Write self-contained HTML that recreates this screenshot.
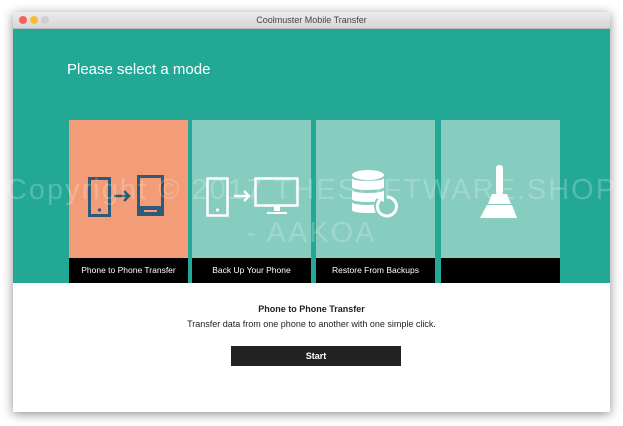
<!DOCTYPE html>
<html><head><style>
body{margin:0;width:623px;height:426px;background:#fff;position:relative;overflow:hidden;font-family:"Liberation Sans",Arial,sans-serif}
.win{position:absolute;left:13px;top:12px;width:597px;height:400px;box-shadow:0 2px 10px rgba(0,0,0,.45);background:#fff}
.title{position:absolute;left:0;top:0;width:597px;height:16px;background:linear-gradient(#ececec,#d6d6d6);border-bottom:1px solid #b8b8b8;font-size:9px;color:#444;text-align:center;line-height:16px}
.dot{position:absolute;top:4px;width:8px;height:8px;border-radius:50%}
.teal{position:absolute;left:0;top:17px;width:597px;height:254px;background:#24a896}
h1{position:absolute;left:54px;top:32px;margin:0;font-size:15px;font-weight:normal;color:#fff}
.tile{position:absolute;top:108px;width:119px;height:163px;background:#86ccbf}
.lab{position:absolute;left:0;bottom:0;width:100%;height:25px;background:#000;color:#fff;font-size:8.5px;text-align:center;line-height:25px}
.tile svg{position:absolute;left:0;top:0}
.wm{position:absolute;left:-10px;top:174px;width:643px;text-align:center;font-size:29px;color:rgba(255,255,255,.22);white-space:nowrap;letter-spacing:2px}
.wm2{position:absolute;left:0;top:217px;width:623px;text-align:center;font-size:29px;color:rgba(255,255,255,.22);letter-spacing:2px}
</style></head><body>
<div class="win">
<div class="title">Coolmuster Mobile Transfer
<div class="dot" style="left:6px;background:#fc5f57"></div><div class="dot" style="left:17px;background:#fdbc2e"></div><div class="dot" style="left:28px;background:#d0d0d0"></div></div>
<div class="teal">
<h1>Please select a mode</h1>
</div>
<div class="tile" style="left:56px;background:#f29d78"><svg width="119" height="138">
<g fill="none" stroke="#2d5a78"><rect x="20.5" y="58.5" width="20" height="37" stroke-width="3"/></g>
<circle cx="30.5" cy="90" r="1.6" fill="#2d5a78"/>
<path d="M45 76h15M55 71l5 5-5 5" stroke="#2d5a78" stroke-width="2.5" fill="none"/>
<rect x="68" y="55" width="27" height="41" fill="#2d5a78"/><rect x="71" y="58" width="21" height="28" fill="#f29d78"/><rect x="75" y="90" width="13" height="2" fill="#f29d78"/>
</svg><div class="lab">Phone to Phone Transfer</div></div>
<div class="tile" style="left:179px"><svg width="119" height="138">
<rect x="15.5" y="58.5" width="20" height="37" stroke="#fff" stroke-width="2.5" fill="none"/><circle cx="25.5" cy="90" r="1.6" fill="#fff"/>
<path d="M42 76h15M52 71l5 5-5 5" stroke="#fff" stroke-width="2.5" fill="none"/>
<rect x="63.5" y="58.5" width="42" height="27" stroke="#fff" stroke-width="2.5" fill="none"/><path d="M82 86h6v5h-6z M75 92h20v2H75z" fill="#fff"/>
</svg><div class="lab">Back Up Your Phone</div></div>
<div class="tile" style="left:303px"><svg width="119" height="138">
<g fill="#fff"><ellipse cx="52" cy="55" rx="16" ry="5"/><path d="M36 58c0 4 32 4 32 0v9c0 4-32 4-32 0z"/><path d="M36 70c0 4 32 4 32 0v9c0 4-32 4-32 0z"/><path d="M36 82c0 4 32 4 32 0v8c0 4-32 4-32 0z"/></g>
<circle cx="71" cy="86" r="13" fill="#86ccbf"/><path d="M64 80a9.5 9.5 0 1 0 7-3" stroke="#fff" stroke-width="3" fill="none"/><path d="M60 78l8-6v10z" fill="#fff"/>
</svg><div class="lab">Restore From Backups</div></div>
<div class="tile" style="left:428px"><svg width="119" height="138">
<g fill="#fff"><rect x="55" y="45" width="7" height="30" rx="3"/><path d="M51 74h15l4 10H47z"/><path d="M46 85h25l5 13H39z"/></g>
</svg><div class="lab"></div></div>
<div style="position:absolute;top:292px;left:0;width:597px;text-align:center;font-size:9px;font-weight:bold;color:#222">Phone to Phone Transfer</div>
<div style="position:absolute;top:307px;left:0;width:597px;text-align:center;font-size:9px;color:#222">Transfer data from one phone to another with one simple click.</div>
<div style="position:absolute;top:334px;left:218px;width:170px;height:20px;background:#222;color:#fff;font-size:9px;font-weight:bold;text-align:center;line-height:20px">Start</div>
</div>
<div class="wm">Copyright © 2017 THESOFTWARE.SHOP</div>
<div class="wm2">- AAKOA</div>
</body></html>
